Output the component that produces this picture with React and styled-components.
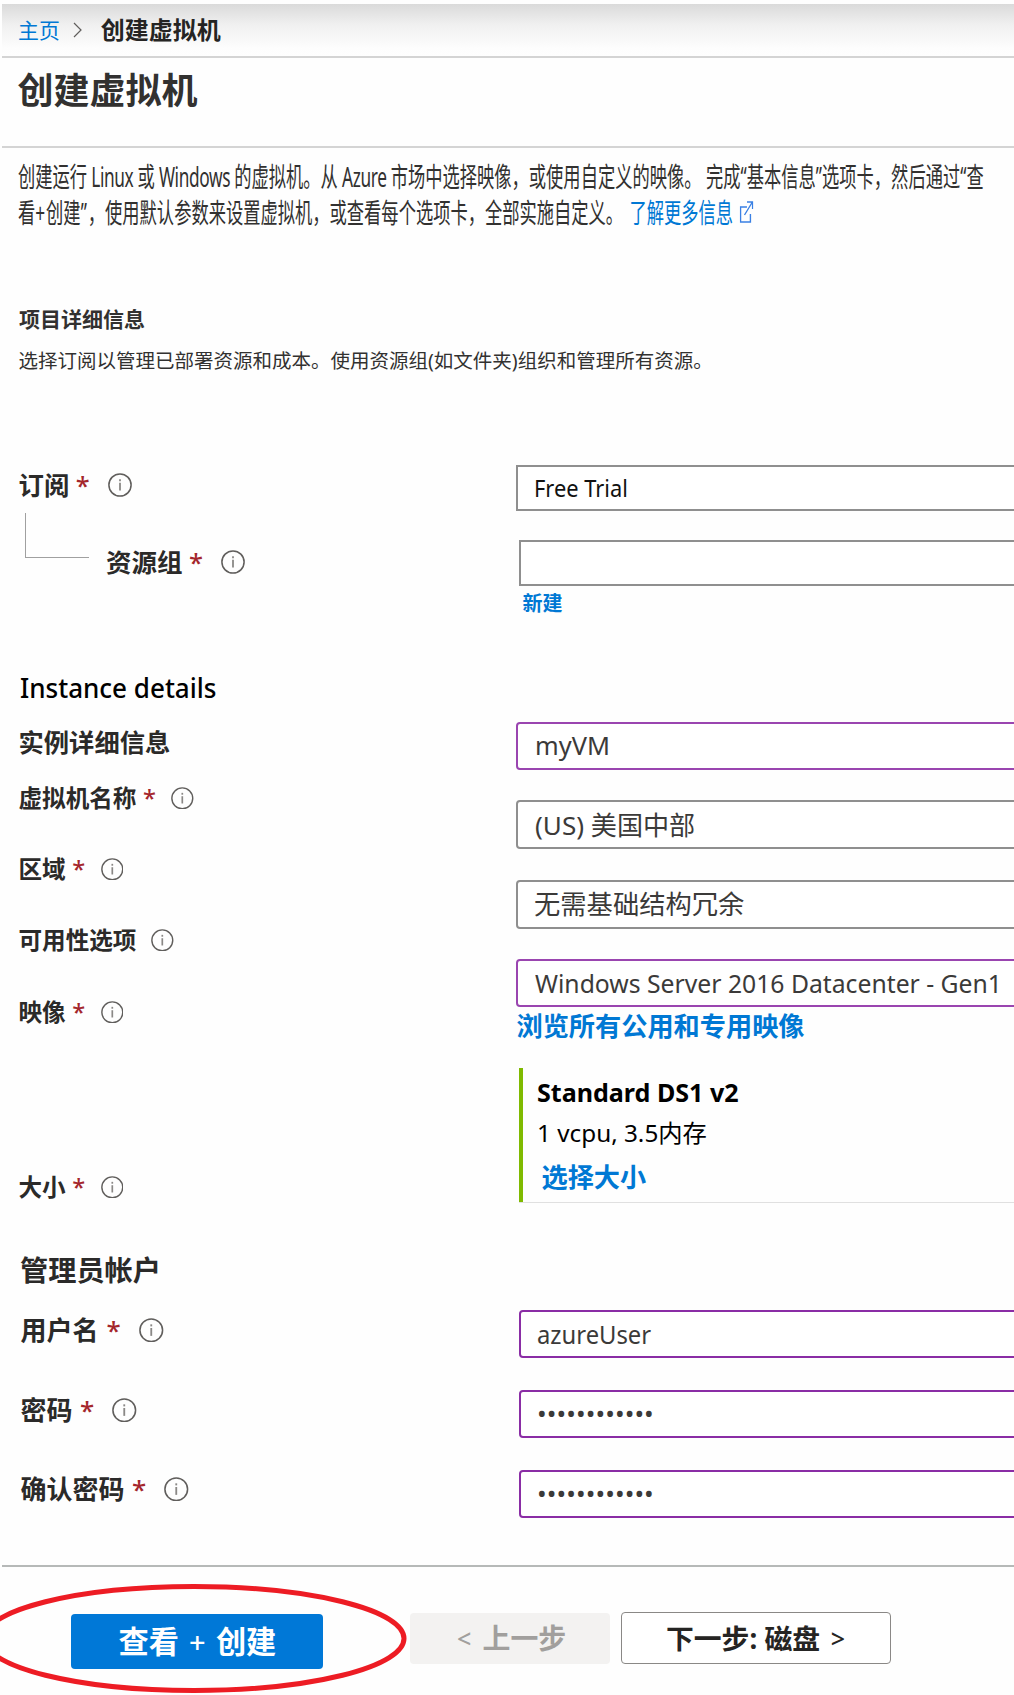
import React from 'react';
import styled, { createGlobalStyle } from 'styled-components';

const Global = createGlobalStyle`
  * { box-sizing: border-box; }
  body {
    margin: 0;
    background: #fefefe;
    color: #323130;
    font-family: 'Noto Sans', 'Open Sans', 'Noto Sans CJK SC', sans-serif;
    overflow: hidden;
  }
`;

const Page = styled.main`
  width: 1014px;
  height: 1695px;
  overflow: hidden;
  padding-top: 4px;
`;

const Breadcrumb = styled.nav`
  display: flex;
  align-items: center;
  height: 54px;
  margin-left: 2px;
  padding-left: 16px;
  background: linear-gradient(#dadada, #f0f0f0 40%, #fdfdfd 85%, #fefefe);
  border-bottom: 2px solid #d4d4d4;
`;

const HomeLink = styled.a`
  color: #0078d4;
  font-size: 20.9px;
  line-height: 30px;
`;

const Chevron = styled.svg`
  width: 9px;
  height: 16px;
  margin: 0 19px 0 13px;
  fill: none;
  stroke: #605e5c;
  stroke-width: 1.2;
`;

const Current = styled.span`
  color: #252423;
  font-size: 24px;
  font-weight: 700;
  line-height: 30px;
`;

const TitleBar = styled.header`
  height: 90px;
  margin-left: 2px;
  padding: 13px 0 0 15.5px;
  border-bottom: 2px solid #d4d4d4;
`;

const Title = styled.h1`
  margin: 0;
  font-size: 36px;
  line-height: 40px;
  font-weight: 700;
`;

const Intro = styled.div`
  padding: 11px 0 0 18px;
`;

const IntroLine = styled.p`
  display: flex;
  align-items: center;
  margin: 0;
  height: 36px;
  width: max-content;
  font-size: 27.5px;
  line-height: 36px;
  white-space: pre;
  transform: scaleX(0.628);
  transform-origin: left center;
`;

const Latin = styled.span`
  letter-spacing: ${(p) => p.$spacing ?? -0.58}px;
`;

const MoreLink = styled.a`
  display: inline-flex;
  align-items: center;
  margin-left: 10px;
  color: #0078d4;
`;

const ExternalIcon = styled.svg`
  width: 22px;
  height: 22px;
  margin: 0 0 3px 10px;
  fill: none;
  stroke: #3a80e4;
  stroke-width: 1.4;
`;

const SectionTitle = styled.h2`
  margin: 73px 0 0 19px;
  font-size: 21px;
  line-height: 30px;
  font-weight: 700;
`;

const SectionText = styled.p`
  margin: 12px 0 0 18.5px;
  font-size: 19.5px;
  line-height: 30px;
  white-space: nowrap;
`;

const Form = styled.form`
  display: grid;
  grid-template-columns: 516px 498px;
  height: 1189px;
`;

const Column = styled.div`
  display: flex;
  flex-direction: column;
  align-items: flex-start;
`;

const Label = styled.label`
  display: flex;
  align-items: center;
  height: 30px;
  margin: ${(p) => p.$top || 0}px 0 0 ${(p) => p.$left ?? 18.5}px;
  color: ${(p) => p.$color || '#2b2a29'};
  font-size: ${(p) => p.$size}px;
  font-weight: ${(p) => p.$weight || 700};
  line-height: 30px;
  white-space: nowrap;
`;

const Star = styled.span`
  width: 14px;
  margin-left: ${(p) => p.$gap || 6.5}px;
  color: #a4262c;
  font-weight: 500;
`;

const InfoSvg = styled.svg`
  width: ${(p) => p.$size}px;
  height: ${(p) => p.$size}px;
  margin-left: ${(p) => p.$gap}px;
  flex: none;
`;

const Branch = styled.div`
  display: flex;
  align-items: flex-end;
  height: 77px;
`;

const Elbow = styled.span`
  align-self: flex-start;
  width: 64px;
  height: 45px;
  margin: 13px 17px 0 25px;
  border-left: 1px solid #a0a0a0;
  border-bottom: 1px solid #a0a0a0;
`;

const Field = styled.div`
  display: flex;
  align-items: center;
  align-self: stretch;
  height: ${(p) => p.$height || 48}px;
  margin: ${(p) => p.$top}px -4px 0 ${(p) => p.$left || 0}px;
  padding: ${(p) => p.$drop || 0}px 0 ${(p) => p.$lift || 0}px ${(p) => p.$inset || 17}px;
  border: 2px solid ${(p) => p.$edge};
  border-radius: ${(p) => p.$radius ?? 4}px;
  background: #fff;
  color: ${(p) => p.$color || '#3b3a39'};
`;

const Value = styled.span`
  display: inline-block;
  font-size: ${(p) => p.$size || 25}px;
  font-weight: ${(p) => p.$weight || 400};
  letter-spacing: ${(p) => p.$spacing || 0}px;
  line-height: 30px;
  white-space: pre;
  transform: scaleX(${(p) => p.$squeeze || 1});
  transform-origin: left center;
`;

const ActionLink = styled.a`
  margin: ${(p) => p.$top}px 0 0 ${(p) => p.$left}px;
  color: #0078d4;
  font-size: ${(p) => p.$size}px;
  font-weight: 700;
  line-height: 30px;
  white-space: nowrap;
`;

const SizeCard = styled.div`
  display: flex;
  flex-direction: column;
  align-items: flex-start;
  align-self: stretch;
  height: 135px;
  margin: 27px 0 0 3px;
  border-bottom: 1px solid #e0e0e0;
  background: linear-gradient(#7fba00, #7fba00) left / 4px 100% no-repeat;
  padding: 10px 0 0 18px;
  color: #000;
`;

const SizeLine = styled.div`
  height: 30px;
  margin-top: ${(p) => p.$top || 0}px;
`;

const Footer = styled.footer`
  display: flex;
  align-items: flex-start;
  height: 130px;
  margin-left: 2px;
  padding-left: 69px;
  border-top: 2px solid #b6b9b8;
`;

const PrimarySlot = styled.div`
  position: relative;
  margin: 47px 87px 0 0;
`;

const Button = styled.button`
  display: flex;
  align-items: center;
  justify-content: flex-start;
  width: ${(p) => p.$width}px;
  height: ${(p) => p.$height}px;
  margin: ${(p) => p.$margin || 0};
  padding: 0 0 ${(p) => p.$lift || 0}px ${(p) => p.$inset}px;
  border: ${(p) => p.$border || 'none'};
  border-radius: 4px;
  background: ${(p) => p.$bg};
  color: ${(p) => p.$color};
  font-family: inherit;
  font-size: ${(p) => p.$size}px;
  font-weight: 700;
  line-height: 36px;
  white-space: pre;
`;

const Sign = styled.span`
  width: ${(p) => p.$width}px;
  font-size: ${(p) => p.$size || 25}px;
  font-weight: ${(p) => p.$weight || 400};
  text-align: ${(p) => p.$align || 'left'};
`;

const Ring = styled.svg`
  position: absolute;
  left: -91px;
  top: -34px;
  width: 430px;
  height: 116px;
  fill: none;
  stroke: #ed1c24;
  stroke-width: 5;
  pointer-events: none;
`;

function Info({ size = 22.6, gap = 14 }) {
  return (
    <InfoSvg viewBox="0 0 24 24" $size={size} $gap={gap}>
      <circle cx="12" cy="12" r="11.1" fill="none" stroke="#605e5c" strokeWidth="1.5" />
      <path d="M12 9.8v7.7" stroke="#8a8886" strokeWidth="1.8" />
      <path d="M12 6.2v2" stroke="#8a8886" strokeWidth="1.8" />
    </InfoSvg>
  );
}

const GRAY = '#8f8f8f';
const PURPLE = '#8a2da5';
const LILAC = '#9a45b0';

export default function App() {
  return (
    <Page>
      <Global />
      <Breadcrumb>
        <HomeLink>主页</HomeLink>
        <Chevron viewBox="0 0 9 16"><path d="M1 1l7 7-7 7" /></Chevron>
        <Current>创建虚拟机</Current>
      </Breadcrumb>
      <TitleBar><Title>创建虚拟机</Title></TitleBar>
      <Intro>
        <IntroLine>
          创建运行<Latin> Linux </Latin>或<Latin> Windows </Latin>的虚拟机。从<Latin> Azure </Latin>市场中选择映像，或使用自定义的映像。 完成“基本信息”选项卡，然后通过“查
        </IntroLine>
        <IntroLine>
          看<Latin $spacing={1.5}>+</Latin>创建<Latin $spacing={1.5}>”</Latin>，使用默认参数来设置虚拟机，或查看每个选项卡，全部实施自定义。
          <MoreLink>
            了解更多信息
            <ExternalIcon viewBox="0 0 14 22" preserveAspectRatio="none">
              <path d="M7.5 6H1v15h10v-8M7.5 1h5.7v7M13 1L5 14" />
            </ExternalIcon>
          </MoreLink>
        </IntroLine>
      </Intro>
      <SectionTitle>项目详细信息</SectionTitle>
      <SectionText>选择订阅以管理已部署资源和成本。使用资源组(如文件夹)组织和管理所有资源。</SectionText>

      <Form>
        <Column>
          <Label $top={94} $size={25.4}>订阅<Star>*</Star><Info size={24} gap={18} /></Label>
          <Branch>
            <Elbow />
            <Label $left={0} $size={25.5}>资源组<Star>*</Star><Info size={24} gap={18} /></Label>
          </Branch>
          <Label as="h2" $top={96} $size={26.5} $weight={500} $color="#000" $left={19.5}>
            <Value $size={26.5} $weight={500} $squeeze={0.982}>Instance details</Value>
          </Label>
          <Label as="h3" $top={24} $size={25.3}>实例详细信息</Label>
          <Label $top={26} $size={23.6}>虚拟机名称<Star>*</Star><Info /></Label>
          <Label $top={41} $size={23.6}>区域<Star>*</Star><Info gap={14.5} /></Label>
          <Label $top={41} $size={23.6}>可用性选项<Info gap={15} /></Label>
          <Label $top={42} $size={23.6}>映像<Star>*</Star><Info gap={14.5} /></Label>
          <Label $top={145} $size={23.6}>大小<Star>*</Star><Info gap={14.5} /></Label>
          <Label as="h3" $top={53} $size={28.2} $left={20}>管理员帐户</Label>
          <Label $top={30} $size={26} $left={20.5}>用户名<Star $gap={8}>*</Star><Info size={24.5} gap={18.5} /></Label>
          <Label $top={50} $size={26} $left={20.5}>密码<Star $gap={7.5}>*</Star><Info size={24.5} gap={18} /></Label>
          <Label $top={49} $size={26} $left={20.5}>确认密码<Star $gap={7.5}>*</Star><Info size={24.5} gap={18} /></Label>
        </Column>

        <Column>
          <Field $top={89} $height={46} $inset={16} $edge={GRAY} $radius={0} $color="#111">
            <Value $size={23.5} $squeeze={0.93}>Free Trial</Value>
          </Field>
          <Field $top={29} $height={46} $left={3} $edge={GRAY} $radius={0} />
          <ActionLink $top={3} $left={6.5} $size={20}>新建</ActionLink>
          <Field $top={103} $lift={2} $edge={LILAC}><Value $squeeze={1.015}>myVM</Value></Field>
          <Field $top={30} $height={49} $drop={1} $edge={GRAY}><Value $size={26.1}>(US) 美国中部</Value></Field>
          <Field $top={31} $height={49} $lift={2} $inset={16} $edge={GRAY}><Value $size={26.3}>无需基础结构冗余</Value></Field>
          <Field $top={30} $edge={LILAC}><Value $squeeze={0.989}>Windows Server 2016 Datacenter - Gen1</Value></Field>
          <ActionLink $top={4} $left={0.5} $size={26.2}>浏览所有公用和专用映像</ActionLink>
          <SizeCard>
            <SizeLine><Value $size={24.5} $weight={700} $squeeze={1.023}>Standard DS1 v2</Value></SizeLine>
            <SizeLine $top={10}><Value $size={24} $squeeze={1.012}>1 vcpu, 3.5内存</Value></SizeLine>
            <ActionLink $top={14} $left={4.5} $size={26.2}>选择大小</ActionLink>
          </SizeCard>
          <Field $top={107} $left={3} $inset={16} $drop={2} $edge={PURPLE}><Value $size={24.5} $squeeze={0.972}>azureUser</Value></Field>
          <Field $top={32} $left={3} $inset={16} $edge={PURPLE}><Value $size={25.7} $spacing={0.08}>••••••••••••</Value></Field>
          <Field $top={32} $left={3} $inset={16} $edge={PURPLE}><Value $size={25.7} $spacing={0.08}>••••••••••••</Value></Field>
        </Column>
      </Form>

      <Footer>
        <PrimarySlot>
          <Button type="button" $width={252} $height={55} $inset={47.5} $bg="#0078d7" $color="#fff" $size={30.2}>
            查看<Sign $width={37} $size={29} $weight={500} $align="center">+</Sign>创建
          </Button>
          <Ring viewBox="-20 1580 430 116"><ellipse cx="194" cy="1638.5" rx="210" ry="52" /></Ring>
        </PrimarySlot>
        <Button type="button" $width={200} $height={51} $inset={47} $lift={2} $margin="46px 11px 0 0" $bg="#f3f2f1" $color="#a19f9d" $size={27.9}>
          <Sign $width={25.5} $weight={500}>&lt;</Sign>上一步
        </Button>
        <Button type="button" $width={270} $height={52} $inset={44} $margin="45px 0 0 0" $bg="#fff" $color="#252423" $border="1.5px solid #8a8886" $size={27.8}>
          下一步: 磁盘<Sign $width={25} $align="right" $weight={500}>&gt;</Sign>
        </Button>
      </Footer>
    </Page>
  );
}
